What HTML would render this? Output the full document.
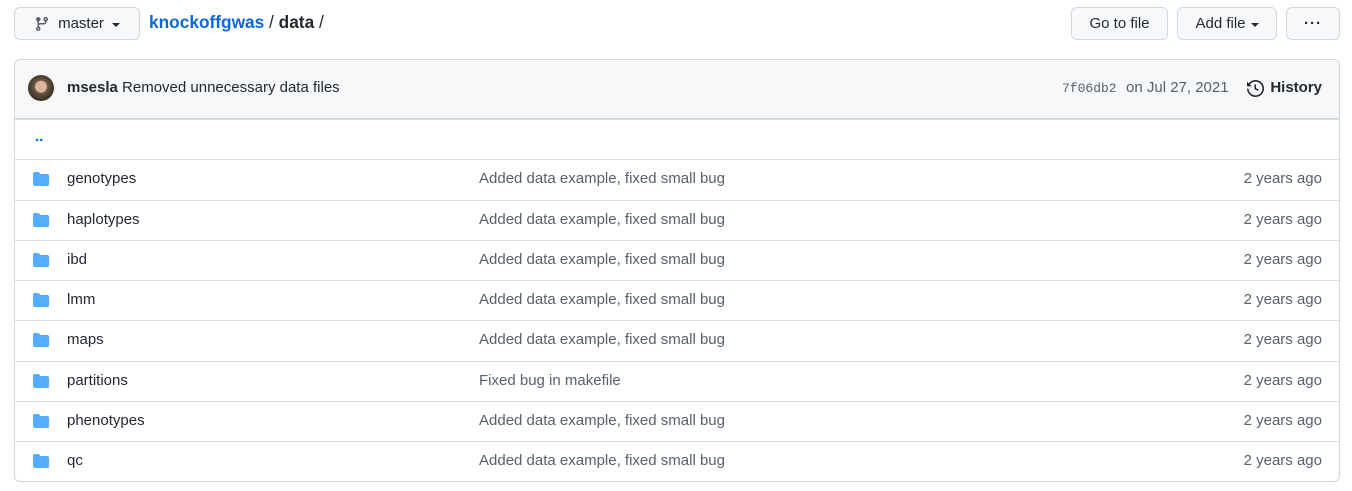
<!DOCTYPE html>
<html><head><style>
body{margin:0;background:#fff;font-family:"Liberation Sans",sans-serif;font-size:15px;color:#24292f;width:1352px;height:491px;overflow:hidden;position:relative}
.btn{position:absolute;top:7px;height:33px;border:1px solid #d0d7de;border-radius:6px;background:#f6f8fa;box-sizing:border-box;display:flex;align-items:center;justify-content:center;font-size:15px;color:#24292f}
.caret{display:inline-block;border-left:4px solid transparent;border-right:4px solid transparent;border-top:4px solid #24292f;margin-left:5px;margin-top:2px}
.crumb{position:absolute;left:149px;top:12px;font-size:17.3px}
.box{position:absolute;left:14px;top:59px;width:1326px;height:423px;border:1px solid #d0d7de;border-radius:6px;box-sizing:border-box;overflow:hidden}
.hdr{height:59px;background:#f6f8fa;border-bottom:1px solid #d0d7de;box-sizing:border-box;position:relative}
.row{height:40.3px;border-top:1px solid #d8dee4;box-sizing:border-box;position:relative}
.row:first-of-type{border-top:none}
.nm{position:absolute;left:52px;top:10px}
.msg{position:absolute;left:464px;top:10px;color:#57606a}
.dt{position:absolute;right:17px;top:10px;color:#57606a}
.fold{position:absolute;left:17px;top:11px}
</style></head><body>
<div class="btn" style="left:14px;width:126px"><svg width="16" height="16" viewBox="0 0 16 16" style="margin-right:8px"><path fill="#57606a" d="M11.75 2.5a.75.75 0 100 1.5.75.75 0 000-1.5zm-2.25.75a2.25 2.25 0 113 2.122V6A2.5 2.5 0 0110 8.5H6a1 1 0 00-1 1v1.128a2.251 2.251 0 11-1.5 0V5.372a2.25 2.25 0 111.5 0v1.836A2.492 2.492 0 016 7h4a1 1 0 001-1v-.628A2.25 2.25 0 019.5 3.250zM4.25 12a.75.75 0 100 1.5.75.75 0 000-1.5zM3.5 3.25a.75.75 0 111.5 0 .75.75 0 01-1.5 0z"/></svg>master<span class="caret" style="margin-left:8px"></span></div>
<div class="crumb"><b style="color:#0969da">knockoffgwas</b> / <b>data</b> /</div>
<div class="btn" style="left:1071px;width:97px">Go to file</div>
<div class="btn" style="left:1177px;width:100px">Add file<span class="caret"></span></div>
<div class="btn" style="left:1286px;width:54px;font-weight:bold;letter-spacing:1px">···</div>
<div class="box">
<div class="hdr">
<div style="position:absolute;left:13px;top:15px;width:26px;height:26px;border-radius:50%;background:radial-gradient(circle at 50% 45%,#d9b49a 0 30%,#6b5a45 32%,#3a3026 70%)"></div>
<div style="position:absolute;left:52px;top:19px"><b>msesla</b> Removed unnecessary data files</div>
<div style="position:absolute;left:1047px;top:21px;font-family:'Liberation Mono',monospace;font-size:13px;color:#57606a">7f06db2</div>
<div style="position:absolute;left:1111px;top:19px;color:#57606a">on Jul 27, 2021</div>
<svg style="position:absolute;left:1232px;top:20px" width="17" height="17" viewBox="0 0 16 16"><path fill="#24292f" d="M1.643 3.143L.427 1.927A.25.25 0 000 2.104V5.75c0 .138.112.25.25.25h3.646a.25.25 0 00.177-.427L2.715 4.215a6.5 6.5 0 11-1.18 4.458.75.75 0 10-1.493.154 8.001 8.001 0 101.6-5.684zM7.75 4a.75.75 0 01.75.75v2.992l2.028.812a.75.75 0 01-.557 1.392l-2.5-1A.75.75 0 017 8.25v-3.5A.75.75 0 017.75 4z"/></svg>
<b style="position:absolute;right:17px;top:19px">History</b>
</div>
<div class="row"><span style="position:absolute;left:20px;top:8px;color:#0969da;font-weight:bold">..</span></div>
<script>
const r=[["genotypes","Added data example, fixed small bug"],["haplotypes","Added data example, fixed small bug"],["ibd","Added data example, fixed small bug"],["lmm","Added data example, fixed small bug"],["maps","Added data example, fixed small bug"],["partitions","Fixed bug in makefile"],["phenotypes","Added data example, fixed small bug"],["qc","Added data example, fixed small bug"]];
for(const [n,m] of r)document.write(`<div class="row"><svg class="fold" width="18" height="16" viewBox="0 0 16 16"><path fill="#54aeff" d="M1.75 1A1.75 1.75 0 000 2.750v10.5C0 14.216.784 15 1.75 15h12.5A1.75 1.75 0 0016 13.25v-8.5A1.75 1.75 0 0014.25 3H7.5a.25.25 0 01-.2-.1l-.9-1.2C6.070 1.26 5.55 1 5 1H1.75z"/></svg><span class="nm">${n}</span><span class="msg">${m}</span><span class="dt">2 years ago</span></div>`);
</script>
</div>
</body></html>
